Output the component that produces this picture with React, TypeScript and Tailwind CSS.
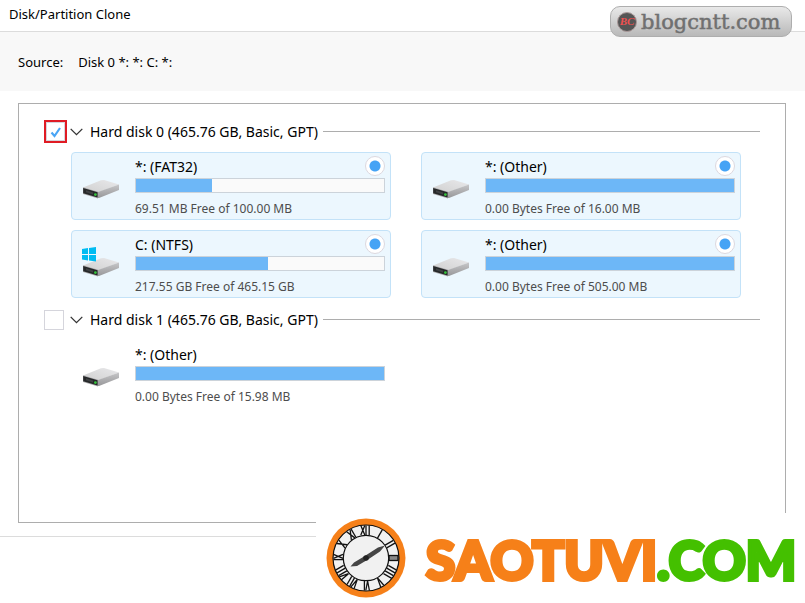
import { useId } from "react";

type Partition = {
  name: string;
  info: string;
  used: number;
  system?: boolean;
};

type Disk = {
  label: string;
  checked: boolean;
  partitions: Partition[];
};

const DISKS: Disk[] = [
  {
    label: "Hard disk 0 (465.76 GB, Basic, GPT)",
    checked: true,
    partitions: [
      { name: "*: (FAT32)", info: "69.51 MB Free of 100.00 MB", used: 30.5 },
      { name: "*: (Other)", info: "0.00 Bytes Free of 16.00 MB", used: 100 },
      { name: "C: (NTFS)",  info: "217.55 GB Free of 465.15 GB", used: 53.2, system: true },
      { name: "*: (Other)", info: "0.00 Bytes Free of 505.00 MB", used: 100 },
    ],
  },
  {
    label: "Hard disk 1 (465.76 GB, Basic, GPT)",
    checked: false,
    partitions: [
      { name: "*: (Other)", info: "0.00 Bytes Free of 15.98 MB", used: 100 },
    ],
  },
];

const NUMERALS = ["XII", "I", "II", "", "IIII", "V", "VI", "VII", "VIII", "IX", "X", "XI"];

function DriveIcon({ system }: { system?: boolean }) {
  const id = useId();
  return (
    <svg viewBox="0 0 38 30" className="h-[30px] w-[38px] shrink-0" aria-hidden="true">
      <defs>
        <linearGradient id={`${id}top`} x1="0" y1="1" x2="1" y2="0">
          <stop offset="0" stopColor="#d0d0d0" />
          <stop offset="1" stopColor="#e8e8ea" />
        </linearGradient>
        <linearGradient id={`${id}side`} x1="0" y1="0" x2="0" y2="1">
          <stop offset="0" stopColor="#c6c6c8" />
          <stop offset="1" stopColor="#98989a" />
        </linearGradient>
      </defs>
      <path d="M1 18.5 19 11.2 22 11 37 15.5 16 23.5Z" fill={`url(#${id}top)`} />
      <path d="M16 23 37 15.5V21L17 29 15 29Z" fill={`url(#${id}side)`} />
      <path d="M1 18.2 16 22.8V29.4L1 25Z" fill="#a9a9ab" />
      <path d="M1.2 18.9 15.6 23.2V28.4L1.2 24.3Z" fill="#262829" />
      <path d="M4 21.2 11 23.4V25.4L4 23.3Z" fill="#3f4143" />
      <circle cx="13.4" cy="25.6" r="1.4" fill="#35c43c" />
      {system && (
        <g fill="#00bcf2">
          <path d="M0 2 6 1.1V7H0ZM7 1 14 0V7H7ZM0 8H6V13.5L0 12.6ZM7 8H14V14.5L7 13.6Z" />
        </g>
      )}
    </svg>
  );
}

function PartitionCard({ partition, group, selected }: { partition: Partition; group: string; selected: boolean }) {
  const { name, info, used, system } = partition;
  return (
    <label
      className={`flex items-start rounded border pr-[5px] pl-[10px] ${
        selected ? "border-[#c3e2f8] bg-[#ecf7fe]" : "border-transparent"
      }`}
    >
      <span className="mt-4 mr-[15px] flex">
        <DriveIcon system={system} />
      </span>
      <span className="flex min-w-0 flex-1 flex-col pt-[3px]">
        <span className="flex h-5 items-center justify-between text-[14px] leading-5">
          <span className="pt-px">{name}</span>
          {selected && (
            <input
              type="radio"
              name={group}
              defaultChecked
              className="size-5 appearance-none rounded-full border border-[#dcd8df] bg-white bg-[radial-gradient(circle,#45a3f5_4px,#45a3f5_5px,transparent_6px)]"
            />
          )}
        </span>
        <span className="mt-0.5 h-[15px] border border-[#ccd3da] bg-[#fafafa]">
          <span className="block h-full bg-[#6db7f7]" style={{ width: `${used}%` }} />
        </span>
        <span className="mt-1.5 text-[12px] leading-5 text-[#4d4d4d]">{info}</span>
      </span>
    </label>
  );
}

function DiskGroup({ disk }: { disk: Disk }) {
  const id = useId();
  return (
    <section className="mb-[10px]">
      <div className="flex h-[23px] items-center pr-[25px] pl-[25px]">
        <span className={`relative flex h-[23px] w-[23px] items-center ${disk.checked ? "justify-center border-2 border-[#e01b24]" : ""}`}>
          <input
            id={id}
            type="checkbox"
            defaultChecked={disk.checked}
            className={`peer shrink-0 appearance-none border border-[#d5d5dc] bg-white ${disk.checked ? "size-[19px]" : "size-5"}`}
          />
          <svg viewBox="0 0 12 12" className="pointer-events-none absolute hidden size-3 peer-checked:block" aria-hidden="true">
            <path d="M1.5 6.5 4.5 10 10 2" fill="none" stroke="#4aa5f5" strokeWidth="2.2" />
          </svg>
        </span>
        <button type="button" aria-label="Collapse" className="ml-[3px] flex h-5 w-[13px] items-center">
          <svg viewBox="0 0 13 8" className="h-2 w-[13px]" aria-hidden="true">
            <path d="M.7.9 6.5 6.7 12.3.9" fill="none" stroke="#333" strokeWidth="1.3" />
          </svg>
        </button>
        <label htmlFor={id} className="ml-[7px] text-[14px] leading-5 whitespace-nowrap">
          {disk.label}
        </label>
        <span className="ml-[5px] h-px flex-1 bg-[#adadad]" />
      </div>
      <div className="mt-[9px] grid grid-cols-2 gap-x-[30px] gap-y-[10px] pr-11 pl-[52px]">
        {disk.partitions.map((partition, i) => (
          <PartitionCard key={i} partition={partition} group={`${id}-${i}`} selected={disk.checked} />
        ))}
      </div>
    </section>
  );
}

function ClockLogo() {
  return (
    <svg viewBox="0 0 80 80" className="size-20 shrink-0" aria-hidden="true">
      <circle cx="40" cy="40" r="39.5" fill="#f68019" />
      <circle cx="40" cy="40" r="33" fill="#f1f1f1" stroke="#111" strokeWidth="1.2" />
      <g stroke="#111" strokeWidth="1.3">
        {NUMERALS.map((numeral, i) => (
          <g key={i} transform={`rotate(${i * 30} 40 40)`}>
            {numeral === "" && <rect x="37.5" y="8" width="5" height="9" fill="#888" />}
            {numeral.split("").map((char, j) => {
              const x = 40 + (j - (numeral.length - 1) / 2) * 3.2;
              if (char === "X") return <path key={j} d={`M${x - 2} 7.5 ${x + 2} 17M${x + 2} 7.5 ${x - 2} 17`} />;
              if (char === "V") return <path key={j} d={`M${x - 1.8} 7.5 ${x} 17 ${x + 1.8} 7.5`} fill="none" />;
              return <path key={j} d={`M${x} 7.5V17`} />;
            })}
          </g>
        ))}
      </g>
      <circle cx="40" cy="40" r="22.7" fill="#f1f1f1" stroke="#111" strokeWidth="1.2" />
      <path d="M24.5 48.5 28 44.5 38 38.5 52 29.5 59 27.5 54 33.5 42 41.5 31 48Z" fill="#454545" />
      <circle cx="40" cy="40" r="2.8" fill="#222" />
    </svg>
  );
}

export default function App() {
  return (
    <div className="relative flex min-h-screen flex-col overflow-hidden bg-white font-['Noto_Sans','Open_Sans',sans-serif] text-black">
      <header className="h-8 border-b border-[#dcdcdc] px-[9px]">
        <h1 className="text-[13px] leading-[29px]">Disk/Partition Clone</h1>
      </header>

      <div className="flex h-[59px] items-center gap-[15px] bg-[#f8f8f8] px-[18px] pt-0.5 text-[13px]">
        <span>Source:</span>
        <span>Disk 0 *: *: C: *:</span>
      </div>

      <main className="mt-3 mr-[19px] mb-[13px] ml-[18px] flex-1 border border-[#adadad] pt-4">
        {DISKS.map((disk) => (
          <DiskGroup key={disk.label} disk={disk} />
        ))}
      </main>

      <footer className="h-[67px] border-t border-[#dcdcdc]" />

      {/* Site badge */}
      <div className="absolute top-[6px] right-[13px] flex h-[31px] w-[182px] items-center gap-1 rounded-[10px] border border-[#aeaeae] bg-linear-to-b from-[#e9e9e9] to-[#b9b9b9] pl-[6px]">
        <span className="flex size-5 shrink-0 items-center justify-center rounded-full border border-[#a99] bg-[#555] font-['Liberation_Serif',serif] text-[11px] font-bold text-[#f05050] italic">
          BC
        </span>
        <span className="font-['DejaVu_Serif',serif] text-[21px] leading-6 text-[#707070] [-webkit-text-stroke:0.5px_#707070]">blogcntt.com</span>
      </div>

      {/* Brand banner */}
      <div className="absolute right-0 bottom-0 flex h-[90px] w-[489px] items-center bg-white pl-[10px]">
        <ClockLogo />
        <span className="ml-5 pt-1 font-['Lato',sans-serif] text-[53px] leading-[86px] font-black text-[#f68019] [-webkit-text-stroke:4px_currentColor]">
          SAOTUVI<span className="text-[#44c000] [-webkit-text-stroke:4px_#44c000]">.COM</span>
        </span>
      </div>
    </div>
  );
}
